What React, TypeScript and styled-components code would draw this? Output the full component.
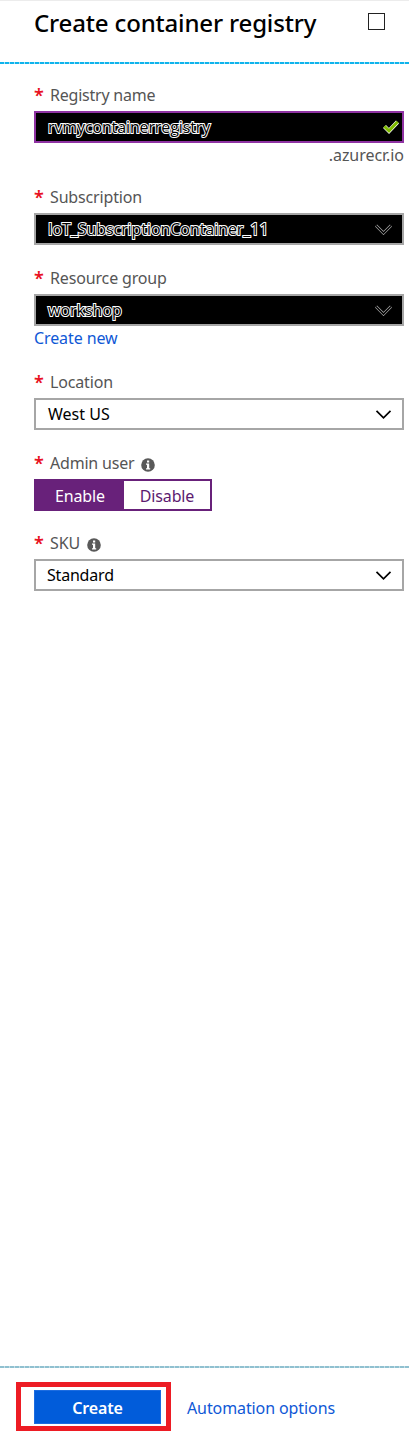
import React from 'react';
import styled, { createGlobalStyle, css } from 'styled-components';

const GlobalStyle = createGlobalStyle`
  * { box-sizing: border-box; }
  body {
    margin: 0;
    background: #fff;
    font-family: "Segoe UI", "Noto Sans", "Open Sans", sans-serif;
    font-size: 16px;
  }
`;

const Blade = styled.main`
  display: flex;
  flex-direction: column;
  width: 409px;
  height: 1437px;
  overflow: hidden;
  border-top: 1px solid #ececec;
`;

const Rule = styled.div<{ $color: string; $soft: string }>`
  flex: none;
  height: 2px;
  background:
    repeating-linear-gradient(90deg, ${p => p.$color} 0 4px, ${p => p.$soft} 4px 5px);
`;

const Header = styled.header`
  display: flex;
  justify-content: space-between;
  flex: none;
  height: 61px;
  padding: 0 24px 0 34px;
`;

const Title = styled.h1`
  margin: 0;
  font-size: 24px;
  line-height: 43px;
  font-weight: 500;
  letter-spacing: -0.16px;
  color: #000;
  white-space: nowrap;
`;

const MaximizeButton = styled.button`
  width: 17px;
  height: 17px;
  margin-top: 12px;
  padding: 0;
  border: 1px solid #222;
  background: #fff;
`;

const Form = styled.form`
  flex: 1;
  padding: 17px 5px 0 34px;
`;

const Field = styled.div<{ $gap?: number }>`
  display: flex;
  flex-direction: column;
  margin-bottom: ${p => p.$gap ?? 0}px;
`;

const Label = styled.label<{ $track?: number }>`
  display: flex;
  align-items: center;
  height: 30px;
  padding-bottom: 2px;
  color: #555;
  letter-spacing: ${p => p.$track ?? -0.15}px;
  white-space: nowrap;
  svg { margin: 3px 0 0 7px; }
`;

const Required = styled.span`
  width: 16px;
  font-size: 18px;
  font-weight: 600;
  line-height: 26px;
  letter-spacing: 0;
  color: #e81123;
`;

const Box = styled.div<{ $dark?: boolean; $valid?: boolean; $inset?: number }>`
  display: flex;
  align-items: center;
  justify-content: space-between;
  height: 32px;
  padding: 0 ${p => (p.$valid ? 3 : 10)}px 0 ${p => p.$inset ?? 12}px;
  border: 2px solid ${p => (p.$valid ? '#8f33a3' : '#a6a6a6')};
  background: ${p => (p.$dark ? '#000' : '#fff')};
`;

const Value = styled.span<{ $outlined?: boolean; $track?: number }>`
  color: #000;
  letter-spacing: ${p => p.$track ?? 0}px;
  white-space: nowrap;
  ${p => p.$outlined && css`
    font-family: "Segoe UI", "Open Sans", sans-serif;
    -webkit-text-stroke: 2px #fff;
    paint-order: stroke fill;
  `}
`;

const Suffix = styled.span`
  align-self: flex-end;
  line-height: 24px;
  letter-spacing: -0.05px;
  color: #555;
`;

const Link = styled.a<{ $track?: number }>`
  line-height: 24px;
  color: #0f58d6;
  letter-spacing: ${p => p.$track ?? -0.1}px;
  white-space: nowrap;
`;

const Toggle = styled.div`
  display: flex;
  width: 178px;
  height: 32px;
  border: 2px solid #68217a;
`;

const Option = styled.span<{ $on?: boolean }>`
  display: flex;
  align-items: center;
  justify-content: center;
  width: ${p => (p.$on ? 88 : 86)}px;
  padding-top: 2px;
  letter-spacing: -0.15px;
  background: ${p => (p.$on ? '#68217a' : '#fff')};
  color: ${p => (p.$on ? '#fff' : '#5c1a70')};
`;

const Footer = styled.footer`
  display: flex;
  align-items: flex-start;
  flex: none;
  height: 69px;
  padding: 14px 0 0 16px;
`;

const Highlight = styled.div`
  width: 155px;
  height: 49px;
  margin-right: 16px;
  padding: 3px 5px 0 13px;
  border: 5px solid #ed1c24;
`;

const CreateButton = styled.button`
  display: block;
  width: 127px;
  height: 34px;
  padding: 2px 0 0;
  border: 1px solid #1c6ce0;
  background: #015cda;
  color: #fff;
  font: 600 16px "Segoe UI", "Noto Sans", "Open Sans", sans-serif;
  letter-spacing: -0.15px;
`;

const FooterLink = styled(Link)`
  margin-top: 14px;
`;

const Chevron = ({ ghost = false }: { ghost?: boolean }) => (
  <svg width="17" height="12" viewBox="0 0 17 12" fill="none">
    {ghost ? (
      <>
        <path d="M1 2.5L8.5 10L16 2.5" stroke="#aaa" strokeWidth="3" />
        <path d="M1 2.5L8.5 10L16 2.5" stroke="#000" strokeWidth="1.6" />
      </>
    ) : (
      <path d="M1.5 2.8L8.5 9.8L15.5 2.8" stroke="#000" strokeWidth="1.7" />
    )}
  </svg>
);

const Check = () => (
  <svg width="16" height="14" viewBox="0 0 16 14" fill="none">
    <path d="M1.5 6.5L6 11L14.5 2" stroke="#fff" strokeWidth="4.2" />
    <path d="M1.4 6.4L6 10.9L14.6 1.8" stroke="#7fba00" strokeWidth="3" />
  </svg>
);

const Info = () => (
  <svg width="14" height="14" viewBox="0 0 14 14">
    <circle cx="7" cy="7" r="6.8" fill="#595959" />
    <path d="M6 2.4h2.2v2H6zM5 5.6h3.2v4.6h1v1.2H5v-1.2h1V6.8H5z" fill="#fff" />
  </svg>
);

export default function App() {
  return (
    <>
      <GlobalStyle />
      <Blade>
        <Header>
          <Title>Create container registry</Title>
          <MaximizeButton type="button" aria-label="Maximize" />
        </Header>
        <Rule $color="#0fb4ec" $soft="#a5e2f6" />
        <Form>
          <Field $gap={16}>
            <Label $track={-0.22}><Required>*</Required>Registry name</Label>
            <Box $dark $valid><Value $outlined $track={-0.12}>rvmycontainerregistry</Value><Check /></Box>
            <Suffix>.azurecr.io</Suffix>
          </Field>
          <Field $gap={19}>
            <Label><Required>*</Required>Subscription</Label>
            <Box $dark><Value $outlined $track={-0.05}>IoT_SubscriptionContainer_11</Value><Chevron ghost /></Box>
          </Field>
          <Field $gap={18}>
            <Label><Required>*</Required>Resource group</Label>
            <Box $dark><Value $outlined>workshop</Value><Chevron ghost /></Box>
            <Link>Create new</Link>
          </Field>
          <Field $gap={19}>
            <Label><Required>*</Required>Location</Label>
            <Box><Value>West US</Value><Chevron /></Box>
          </Field>
          <Field $gap={18}>
            <Label $track={-0.2}><Required>*</Required>Admin user<Info /></Label>
            <Toggle><Option $on>Enable</Option><Option>Disable</Option></Toggle>
          </Field>
          <Field>
            <Label><Required>*</Required>SKU<Info /></Label>
            <Box $inset={11}><Value $track={-0.2}>Standard</Value><Chevron /></Box>
          </Field>
        </Form>
        <Rule $color="#8fc0d0" $soft="#c3dde5" />
        <Footer>
          <Highlight><CreateButton type="button">Create</CreateButton></Highlight>
          <FooterLink>Automation options</FooterLink>
        </Footer>
      </Blade>
    </>
  );
}
